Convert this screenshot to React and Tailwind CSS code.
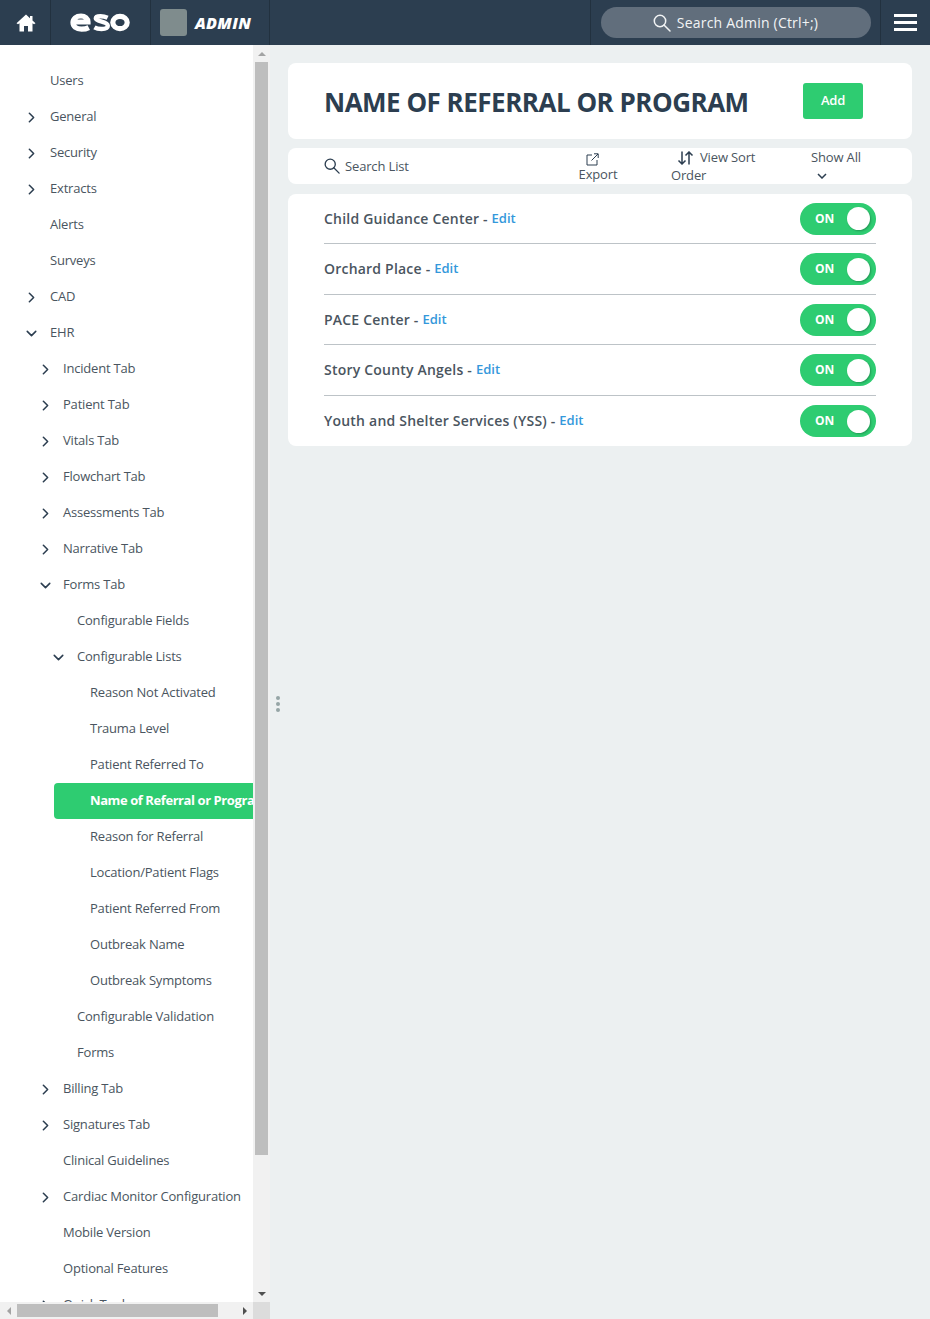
import React from "react";
import { ChevronRight, ChevronDown } from "lucide-react";

const font = "font-['Open_Sans',sans-serif]";

const nav = [
  ["Users", 0, null], ["General", 0, "r"], ["Security", 0, "r"], ["Extracts", 0, "r"], ["Alerts", 0, null], ["Surveys", 0, null], ["CAD", 0, "r"], ["EHR", 0, "d"],
  ["Incident Tab", 1, "r"], ["Patient Tab", 1, "r"], ["Vitals Tab", 1, "r"], ["Flowchart Tab", 1, "r"], ["Assessments Tab", 1, "r"], ["Narrative Tab", 1, "r"], ["Forms Tab", 1, "d"],
  ["Configurable Fields", 2, null], ["Configurable Lists", 2, "d"],
  ["Reason Not Activated", 3, null], ["Trauma Level", 3, null], ["Patient Referred To", 3, null], ["Name of Referral or Program", 3, null, true], ["Reason for Referral", 3, null], ["Location/Patient Flags", 3, null], ["Patient Referred From", 3, null], ["Outbreak Name", 3, null], ["Outbreak Symptoms", 3, null],
  ["Configurable Validation", 2, null], ["Forms", 2, null],
  ["Billing Tab", 1, "r"], ["Signatures Tab", 1, "r"], ["Clinical Guidelines", 1, null], ["Cardiac Monitor Configuration", 1, "r"], ["Mobile Version", 1, null], ["Optional Features", 1, null], ["Quick Tools", 1, "r"],
];

const indentClass = ["pl-[50px]", "pl-[63px]", "pl-[77px]", "pl-[90px]"];
const chevronClass = ["left-[23px]", "left-[37px]", "left-[50px]", "left-[64px]"];

function Magnifier({ size, className }) {
  return (
    <svg width={size} height={size} viewBox="0 0 18 18" fill="none" stroke="currentColor" strokeWidth="1.5" className={className}>
      <circle cx="7" cy="7" r="5.7" />
      <path d="M11 11 L17 17" strokeLinecap="round" />
    </svg>
  );
}

function NavRow({ label, level, icon, active }) {
  const Icon = icon === "d" ? ChevronDown : ChevronRight;
  return (
    <div className={`relative h-9 shrink-0 flex items-center whitespace-nowrap text-[13px] ${indentClass[level]} ${active ? "ml-[54px] !pl-[36px] bg-[#2ecc71] text-white font-bold tracking-[-0.42px] rounded-l" : "text-[#4a5560] tracking-[-0.2px]"}`}>
      {icon && <Icon size={17} strokeWidth={2.2} className={`absolute top-[10px] text-[#2c3e50] ${chevronClass[level]}`} />}
      {label}
    </div>
  );
}

function Toggle() {
  return (
    <div className="w-[76px] h-[32px] rounded-full bg-[#2ecc71] flex items-center justify-between pl-[15px] pr-[6px] shrink-0">
      <span className="text-white text-[12px] font-bold tracking-[-0.1px]">ON</span>
      <span className="w-[23px] h-[23px] rounded-full bg-white shadow-[1px_1px_2px_rgba(0,0,0,0.25)]" />
    </div>
  );
}

function ListRow({ name, last, h }) {
  return (
    <div className={`flex items-center justify-between ${h} ${last ? "" : "border-b border-[#bdc3c7]"}`}>
      <div className="text-[14px] font-[550] text-[#4a5560] tracking-[0.21px]">
        {name} - <span className="inline-block -translate-y-px text-[#3498db] text-[13px] font-semibold tracking-normal">Edit</span>
      </div>
      <Toggle />
    </div>
  );
}

export default function App() {
  return (
    <div className={`w-[930px] h-[1319px] flex flex-col overflow-hidden bg-[#ecf0f1] ${font}`}>
      <header className="h-[45px] shrink-0 bg-[#2c3e50] flex text-white">
        <div className="w-[51px] flex items-center justify-center border-r border-[#22313f] pl-px">
          <svg width="20" height="18" viewBox="0 0 20 18" fill="white"><path d="M10 0.5 L0.5 9.2 L2 10.3 L3.5 9.2 V17.5 H8 V12 H12 V17.5 H16.5 V9.2 L18 10.3 L19.5 9.2 L16.5 6.5 V2 H14 V4.2 Z" /></svg>
        </div>
        <div className="w-[100px] flex items-center justify-center border-r border-[#22313f] pr-[2px]">
          <svg width="60" height="19" viewBox="0 0 60 19" fill="none" stroke="white">
            <path d="M3.5 9 H18 C18 5.5 15 3 11 3 C6 3 3 5.8 3 9.6 C3 13.4 6 16.2 11.5 16.2 C14 16.2 16.5 15.8 18.8 14.6" strokeWidth="5.2" />
            <path d="M37.6 4.8 C35.5 3.8 33 3.2 30.5 3.2 C27.5 3.2 25.8 4 25.8 5.4 C25.8 8.8 37.8 7.8 37.8 12.8 C37.8 15 35 16 31.5 16 C28.8 16 26.3 15.5 24.4 14.4" strokeWidth="4.4" />
            <ellipse cx="50" cy="9.5" rx="7.2" ry="6.2" strokeWidth="5.2" />
          </svg>
        </div>
        <div className="w-[119px] flex items-center pl-[9px] border-r border-[#22313f]">
          <div className="w-[27px] h-[27px] rounded-[3px] bg-[#7f8c8d]" />
          <span className="ml-2 text-[16px] font-extrabold italic tracking-[0.3px]">ADMIN</span>
        </div>
        <div className="w-[321px] border-r border-[#22313f]" />
        <div className="w-[290px] flex items-center justify-center border-r border-[#22313f]">
          <div className="w-[270px] h-[31px] rounded-full bg-[#616e7c] flex items-center justify-center text-[14px] tracking-[0.2px] text-[#f2f4f5]">
            <Magnifier size={18} className="mr-[6px]" />
            Search Admin (Ctrl+;)
          </div>
        </div>
        <div className="flex-1 flex flex-col items-center justify-center gap-[4px]">
          <span className="w-[23px] h-[3px] bg-white" />
          <span className="w-[23px] h-[3px] bg-white" />
          <span className="w-[23px] h-[3px] bg-white" />
        </div>
      </header>

      <div className="flex-1 flex min-h-0">
        <aside className="w-[270px] shrink-0 flex flex-col bg-white">
          <div className="flex-1 min-h-0 flex">
            <nav className="w-[253px] overflow-hidden flex flex-col pt-[18px]">
              {nav.map(([label, level, icon, active]) => (
                <NavRow key={label} label={label} level={level} icon={icon} active={active} />
              ))}
            </nav>
            <div className="w-[17px] bg-[#f1f1f1] flex flex-col items-center">
              <div className="h-[17px] shrink-0 flex items-center justify-center"><span className="w-0 h-0 border-x-[4px] border-x-transparent border-b-[4px] border-b-[#a3a3a3]" /></div>
              <div className="w-[13px] h-[1093px] bg-[#bebebe]" />
              <div className="flex-1" />
              <div className="h-[17px] shrink-0 flex items-center justify-center"><span className="w-0 h-0 border-x-[4px] border-x-transparent border-t-[4px] border-t-[#505050]" /></div>
            </div>
          </div>
          <div className="h-[17px] shrink-0 flex bg-[#f1f1f1]">
            <div className="w-[17px] flex items-center justify-center"><span className="w-0 h-0 border-y-[4px] border-y-transparent border-r-[4px] border-r-[#a3a3a3]" /></div>
            <div className="w-[201px] h-[13px] mt-[2px] bg-[#bebebe]" />
            <div className="w-[35px] flex items-center justify-end pr-[6px]"><span className="w-0 h-0 border-y-[4px] border-y-transparent border-l-[4px] border-l-[#505050]" /></div>
            <div className="w-[17px] bg-[#dcdcdc]" />
          </div>
        </aside>

        <div className="w-[18px] shrink-0 flex flex-col items-center gap-[2px] pt-[651px] pr-[2px]">
          <span className="w-[4px] h-[4px] rounded-full bg-[#95a5a6]" />
          <span className="w-[4px] h-[4px] rounded-full bg-[#95a5a6]" />
          <span className="w-[4px] h-[4px] rounded-full bg-[#95a5a6]" />
        </div>

        <main className="w-[624px] pt-[18px]">
          <section className="h-[76px] bg-white rounded-lg flex items-center justify-between pl-[36px] pr-[49px]">
            <h1 className="text-[26px] leading-none font-bold tracking-[-0.5px] text-[#2c3e50] pt-px whitespace-nowrap">NAME OF REFERRAL OR PROGRAM</h1>
            <button className="w-[60px] h-[36px] bg-[#2ecc71] rounded-[3px] text-white text-[13px] font-semibold tracking-[-0.2px]">Add</button>
          </section>

          <section className="h-[36px] mt-[9px] bg-white rounded-lg flex text-[13px] tracking-[-0.15px] leading-[18px] text-[#4a5560]">
            <div className="w-[291px] pl-[36px] flex items-center gap-[5px]">
              <Magnifier size={16} className="text-[#2c3e50]" />
              Search List
            </div>
            <div className="w-[38px] flex flex-col items-center pt-[5px]">
              <svg className="mr-[12px]" width="13" height="13" viewBox="0 0 13 13" fill="none" stroke="#2c3e50" strokeWidth="1">
                <path d="M6 2 H1 V12 H11 V7 M5.5 7.5 L12 1 M8 0.8 H12.2 V5" />
              </svg>
              <span className="-mt-[1px]">Export</span>
            </div>
            <div className="w-[90px] ml-[54px] indent-[6px]">
              <svg className="inline-block align-[-3px] mr-[6px] text-[#2c3e50]" width="17" height="14" viewBox="0 0 17 14" fill="none" stroke="currentColor" strokeWidth="1.5">
                <path d="M5 0.5 V13 M1.5 9.5 L5 13 L8.5 9.5 M12 13.5 V1 M8.5 4.5 L12 1 L15.5 4.5" />
              </svg>
              View Sort Order
            </div>
            <div className="w-[52px] ml-[50px] flex flex-col items-start">
              <span className="whitespace-nowrap">Show All</span>
              <svg className="ml-[6px] mt-[7px]" width="10" height="6" viewBox="0 0 10 6" fill="none" stroke="#2c3e50" strokeWidth="1.5">
                <path d="M1 1 L5 5 L9 1" />
              </svg>
            </div>
          </section>

          <section className="h-[252px] mt-[10px] bg-white rounded-lg px-[36px]">
            <ListRow name="Child Guidance Center" h="h-[50px]" />
            <ListRow name="Orchard Place" h="h-[51px]" />
            <ListRow name="PACE Center" h="h-[50px]" />
            <ListRow name="Story County Angels" h="h-[51px]" />
            <ListRow name="Youth and Shelter Services (YSS)" h="h-[50px]" last />
          </section>
        </main>
      </div>
    </div>
  );
}
